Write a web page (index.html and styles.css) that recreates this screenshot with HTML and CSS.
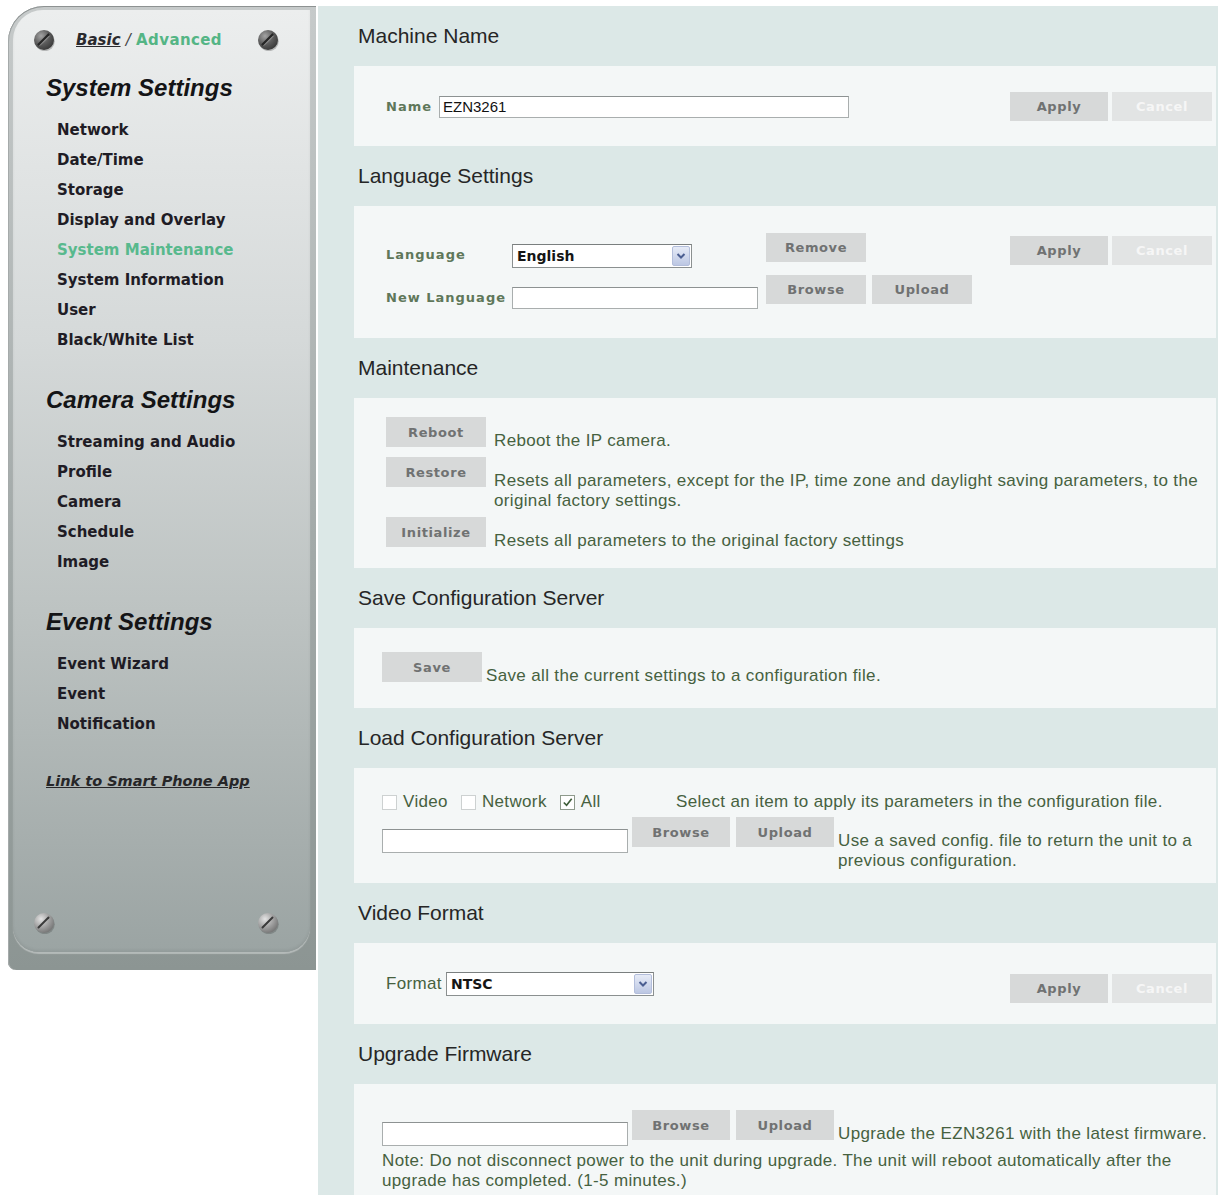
FILE: index.html
```html
<!DOCTYPE html>
<html>
  <head>
    <title>Advanced Settings - System Maintenance</title>
    <link rel="stylesheet" href="styles.css">
  </head>
  <body>
    <div class="page">
      <aside class="sidebar">
        <div class="plate">
          <div class="plate-top">
            <svg class="screw" viewBox="0 0 22 22">
              <defs>
                <radialGradient id="screw-dark" cx="35%" cy="30%" r="75%">
                  <stop offset="0" stop-color="#a4a4a4" />
                  <stop offset="0.55" stop-color="#5c5c5c" />
                  <stop offset="1" stop-color="#383838" />
                </radialGradient>
                <radialGradient id="screw-light" cx="35%" cy="30%" r="75%">
                  <stop offset="0" stop-color="#e4e4e4" />
                  <stop offset="0.55" stop-color="#a2a2a2" />
                  <stop offset="1" stop-color="#747474" />
                </radialGradient>
              </defs>
              <circle cx="11.8" cy="12.2" r="10" fill="rgba(0,0,0,0.22)" />
              <circle cx="11" cy="11" r="10" fill="url(#screw-dark)" />
              <path d="M5.5 15.5 L15.5 5.5" stroke="#262626" stroke-width="2.2" stroke-linecap="round" />
              <path d="M6.8 16.6 L16.6 6.8" stroke="#b4b4b4" stroke-width="1" opacity="0.6" />
            </svg>
            <div class="mode"><a class="basic" href="#">Basic</a> <span class="slash">/</span> <span class="advanced">Advanced</span></div>
            <svg class="screw right" viewBox="0 0 22 22">
              <circle cx="11.8" cy="12.2" r="10" fill="rgba(0,0,0,0.22)" />
              <circle cx="11" cy="11" r="10" fill="url(#screw-dark)" />
              <path d="M5.5 15.5 L15.5 5.5" stroke="#262626" stroke-width="2.2" stroke-linecap="round" />
              <path d="M6.8 16.6 L16.6 6.8" stroke="#b4b4b4" stroke-width="1" opacity="0.6" />
            </svg>
          </div>
          <nav class="menu">
            <h3>System Settings</h3>
            <ul>
              <li>Network</li>
              <li>Date/Time</li>
              <li>Storage</li>
              <li>Display and Overlay</li>
              <li class="active">System Maintenance</li>
              <li>System Information</li>
              <li>User</li>
              <li>Black/White List</li>
            </ul>
            <h3>Camera Settings</h3>
            <ul>
              <li>Streaming and Audio</li>
              <li>Profile</li>
              <li>Camera</li>
              <li>Schedule</li>
              <li>Image</li>
            </ul>
            <h3>Event Settings</h3>
            <ul>
              <li>Event Wizard</li>
              <li>Event</li>
              <li>Notification</li>
            </ul>
            <a class="app-link" href="#">Link to Smart Phone App</a>
          </nav>
          <div class="plate-bottom">
            <svg class="screw small" viewBox="0 0 22 22">
              <circle cx="11.8" cy="12.2" r="10" fill="rgba(0,0,0,0.18)" />
              <circle cx="11" cy="11" r="10" fill="url(#screw-light)" />
              <path d="M5.5 15.5 L15.5 5.5" stroke="#3a3a3a" stroke-width="2" stroke-linecap="round" />
            </svg>
            <svg class="screw small" viewBox="0 0 22 22">
              <circle cx="11.8" cy="12.2" r="10" fill="rgba(0,0,0,0.18)" />
              <circle cx="11" cy="11" r="10" fill="url(#screw-light)" />
              <path d="M5.5 15.5 L15.5 5.5" stroke="#3a3a3a" stroke-width="2" stroke-linecap="round" />
            </svg>
          </div>
        </div>
      </aside>

      <main class="content">
        <h2>Machine Name</h2>
        <section class="box box-name">
          <label class="field-label" for="name">Name</label>
          <input class="text-input name-input" id="name" type="text" value="EZN3261" />
          <div class="actions">
            <button class="btn">Apply</button>
            <button class="btn cancel">Cancel</button>
          </div>
        </section>

        <h2>Language Settings</h2>
        <section class="box box-lang">
          <label class="field-label">Language</label>
          <div class="select lang-select"><span>English</span><span class="arrow"><svg viewBox="0 0 10 8"><path d="M1.5 2 L5 5.5 L8.5 2" /></svg></span></div>
          <div class="btn-group"><button class="btn">Remove</button></div>
          <div class="actions lang-actions">
            <button class="btn">Apply</button>
            <button class="btn cancel">Cancel</button>
          </div>
          <label class="field-label second">New Language</label>
          <input class="text-input lang-input" type="text" />
          <div class="btn-group">
            <button class="btn">Browse</button>
            <button class="btn">Upload</button>
          </div>
        </section>

        <h2>Maintenance</h2>
        <section class="box box-maint">
          <div class="task">
            <button class="btn">Reboot</button>
            <p class="desc">Reboot the IP camera.</p>
          </div>
          <div class="task">
            <button class="btn">Restore</button>
            <p class="desc">Resets all parameters, except for the IP, time zone and daylight saving parameters, to the original factory settings.</p>
          </div>
          <div class="task">
            <button class="btn">Initialize</button>
            <p class="desc">Resets all parameters to the original factory settings</p>
          </div>
        </section>

        <h2>Save Configuration Server</h2>
        <section class="box box-save">
          <div class="task">
            <button class="btn">Save</button>
            <p class="desc">Save all the current settings to a configuration file.</p>
          </div>
        </section>

        <h2>Load Configuration Server</h2>
        <section class="box box-load">
          <div class="check-row">
            <div class="checks">
              <span class="check"><span class="box-tick"></span>Video</span>
              <span class="check"><span class="box-tick"></span>Network</span>
              <span class="check"><span class="box-tick checked"><svg viewBox="0 0 14 14"><path d="M3 7 L6 10 L11.5 3" /></svg></span>All</span>
            </div>
            <p class="desc">Select an item to apply its parameters in the configuration file.</p>
          </div>
          <div class="file-row">
            <input class="text-input file-input" type="text" />
            <button class="btn">Browse</button>
            <button class="btn">Upload</button>
            <p class="desc">Use a saved config. file to return the unit to a previous configuration.</p>
          </div>
        </section>

        <h2>Video Format</h2>
        <section class="box box-video">
          <label class="desc format-label">Format</label>
          <div class="select format-select"><span>NTSC</span><span class="arrow"><svg viewBox="0 0 10 8"><path d="M1.5 2 L5 5.5 L8.5 2" /></svg></span></div>
          <div class="actions">
            <button class="btn">Apply</button>
            <button class="btn cancel">Cancel</button>
          </div>
        </section>

        <h2>Upgrade Firmware</h2>
        <section class="box box-upgrade">
          <div class="file-row">
            <input class="text-input file-input" type="text" />
            <button class="btn">Browse</button>
            <button class="btn">Upload</button>
            <p class="desc">Upgrade the EZN3261 with the latest firmware.</p>
          </div>
          <p class="desc note">Note: Do not disconnect power to the unit during upgrade. The unit will reboot automatically after the upgrade has completed. (1-5 minutes.)</p>
        </section>
      </main>
    </div>
  </body>
</html>
```

FILE: styles.css
```css
* {
  box-sizing: border-box;
}
body {
  margin: 0;
  background: #fff;
  font-family: 'Liberation Sans', Arial, sans-serif;
  color: #222;
}
.page {
  display: flex;
  align-items: flex-start;
  gap: 2px;
  padding: 6px 0 0 8px;
}

/* left metal plate */
.sidebar {
  width: 308px;
  height: 964px;
  padding: 4px 6px 18px 5px;
  border-radius: 36px 0 0 8px;
  background: linear-gradient(#c6caca, #a3aaa9 55%, #8c9593);
  box-shadow: inset 0 1px 0 #8d9292, inset 1px 0 0 #a5aaaa;
}
.plate {
  height: 100%;
  display: flex;
  flex-direction: column;
  padding: 15px 31px 18px 20px;
  border-radius: 30px 0 26px 26px;
  background: linear-gradient(#eceeee, #d5d9d9 35%, #bcc2c1 65%, #9ba4a3);
  box-shadow: 0 2px 1px rgba(255, 255, 255, 0.35), inset 0 -2px 3px rgba(0, 0, 0, 0.06);
}
.plate-top {
  display: flex;
  align-items: center;
  height: 30px;
}
.screw {
  width: 22px;
  height: 22px;
  flex: none;
}
.screw.right {
  margin-left: auto;
}
.mode {
  margin-left: 21px;
  font: bold 15px 'DejaVu Sans', sans-serif;
  white-space: nowrap;
}
.mode .basic {
  color: #2a2a2e;
  font-style: italic;
  text-decoration: underline;
}
.mode .slash {
  color: #444;
  font-style: italic;
  font-weight: normal;
}
.mode .advanced {
  color: #54b585;
  letter-spacing: 0.4px;
}
.menu {
  padding-left: 13px;
}
.menu h3 {
  margin: 18px 0 12px;
  font: italic bold 24px/30px 'Liberation Sans', Arial, sans-serif;
  color: #141416;
}
.menu ul + h3 {
  margin-top: 30px;
}
.menu ul {
  list-style: none;
  margin: 0;
  padding-left: 11px;
}
.menu li {
  font: bold 15px/30px 'DejaVu Sans', sans-serif;
  color: #1f1c25;
  white-space: nowrap;
}
.menu li.active {
  color: #58b98d;
}
.app-link {
  display: block;
  margin-top: 27px;
  font: italic bold 14.5px/30px 'DejaVu Sans', sans-serif;
  color: #262628;
  text-decoration: underline;
  white-space: nowrap;
}
.plate-bottom {
  margin-top: auto;
  display: flex;
  justify-content: space-between;
}

/* right content */
.content {
  width: 900px;
  background: #dce8e7;
  padding: 0 2px 0 36px;
}
.content h2 {
  margin: 0 0 0 4px;
  font: normal 21px/60px 'Liberation Sans', Arial, sans-serif;
  color: #262626;
}
.box {
  background: #f4f7f7;
  padding-left: 32px;
  padding-right: 4px;
}
.field-label {
  font: bold 13px/22px 'DejaVu Sans', sans-serif;
  letter-spacing: 1px;
  color: #5f775a;
  white-space: nowrap;
}
.desc {
  margin: 0;
  font-family: 'Liberation Sans', Arial, sans-serif;
  font-size: 17px;
  line-height: 20px;
  letter-spacing: 0.35px;
  color: #46613f;
}
.text-input {
  height: 22px;
  padding: 0 3px;
  border: 1px solid #a9aeae;
  border-top-color: #8d9292;
  background: #fff;
  font-family: 'Liberation Sans', Arial, sans-serif;
  font-size: 15px;
  color: #111;
}
.btn {
  flex: none;
  width: 98px;
  height: 29px;
  padding: 0;
  border: 0;
  background: #d7d9d9;
  font: bold 13px 'DejaVu Sans', sans-serif;
  letter-spacing: 0.6px;
  color: #707272;
}
.btn.cancel {
  width: 100px;
  background: #e2e4e4;
  color: #f6f6f6;
}
.actions {
  display: flex;
  gap: 4px;
  margin-left: auto;
}
.btn-group {
  display: flex;
  gap: 6px;
}
.btn-group .btn {
  width: 100px;
}
.select {
  display: flex;
  align-items: center;
  height: 24px;
  padding-left: 4px;
  border: 1px solid #8b9090;
  border-top-color: #7a7f7f;
  background: #fff;
  font: bold 14px 'DejaVu Sans', sans-serif;
  color: #151515;
}
.select .arrow {
  display: flex;
  align-items: center;
  justify-content: center;
  width: 18px;
  height: 20px;
  margin: 0 1px 0 auto;
  border: 1px solid #b3bedb;
  border-radius: 2px;
  background: linear-gradient(#e6ebf7, #bcc7e3);
}
.select .arrow svg {
  width: 10px;
  height: 8px;
  fill: none;
  stroke: #4b5e91;
  stroke-width: 2;
}

/* machine name */
.box-name {
  display: flex;
  align-items: center;
  padding-top: 26px;
  padding-bottom: 25px;
}
.name-input {
  width: 410px;
  margin-left: 7px;
}

/* language */
.box-lang {
  display: grid;
  grid-template-columns: 126px 254px auto 1fr auto;
  grid-template-rows: 42px 42px;
  align-items: start;
  padding-top: 26px;
  padding-bottom: 22px;
}
.box-lang .field-label {
  margin-top: 12px;
}
.box-lang .field-label.second {
  grid-column: 1;
  margin-top: 13px;
}
.lang-select {
  width: 180px;
  margin-top: 12px;
}
.box-lang .btn-group {
  margin-top: 1px;
}
.lang-actions {
  grid-column: 5;
  margin-top: 4px;
}
.lang-input {
  width: 246px;
  margin-top: 13px;
}

/* maintenance / save rows */
.task {
  display: flex;
  align-items: flex-start;
  gap: 8px;
}
.task .btn {
  width: 100px;
  height: 30px;
}
.task .desc {
  padding-top: 14px;
}
.box-maint {
  display: flex;
  flex-direction: column;
  gap: 6px;
  padding-top: 19px;
  padding-bottom: 17px;
}
.box-save {
  padding: 24px 4px 22px 28px;
}
.box-save .task {
  gap: 4px;
}

/* load configuration */
.box-load {
  padding: 22px 4px 12px 28px;
}
.check-row {
  display: flex;
  align-items: center;
  height: 24px;
  margin-bottom: 3px;
}
.checks {
  display: flex;
  align-items: center;
  width: 294px;
  flex: none;
}
.check {
  display: flex;
  align-items: center;
  gap: 6px;
  margin-right: 13px;
  font-family: 'Liberation Sans', Arial, sans-serif;
  font-size: 17px;
  letter-spacing: 0.35px;
  color: #46613f;
}
.box-tick {
  display: flex;
  width: 15px;
  height: 15px;
  border: 1px solid #cdd1d1;
  background: #fff;
}
.box-tick.checked {
  border-color: #8e9a8c;
}
.box-tick svg {
  width: 13px;
  height: 13px;
  fill: none;
  stroke: #3f5e3a;
  stroke-width: 1.8;
}
.file-row {
  display: flex;
  align-items: flex-start;
  gap: 4px;
}
.file-row .btn + .btn {
  margin-left: 2px;
}
.file-input {
  flex: none;
  width: 246px;
  height: 24px;
  margin-top: 12px;
}
.file-row .btn {
  height: 30px;
}
.file-row .desc {
  flex: 1;
  min-width: 0;
  padding-top: 14px;
}

/* video format */
.box-video {
  display: flex;
  align-items: flex-start;
  padding-top: 29px;
  padding-bottom: 21px;
}
.format-label {
  line-height: 24px;
  white-space: nowrap;
}
.format-select {
  width: 208px;
  margin-left: 4px;
}
.box-video .actions {
  margin-top: 2px;
}

/* upgrade firmware */
.box-upgrade {
  padding: 26px 4px 4px 28px;
}
.note {
  margin-top: 5px;
}
```
